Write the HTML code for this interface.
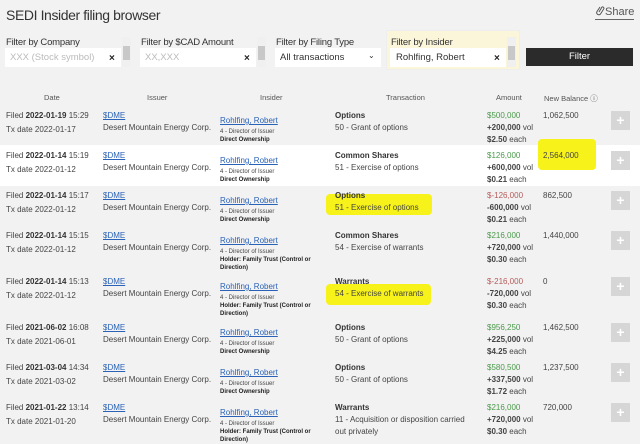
<!DOCTYPE html>
<html><head><meta charset="utf-8">
<style>
*{margin:0;padding:0;box-sizing:border-box}
body{width:640px;height:444px;overflow:hidden;background:#f2f2f2;font-family:"Liberation Sans",sans-serif;color:#333;position:relative}
.a{position:absolute;white-space:nowrap}
.t{font-size:14px;color:#333;letter-spacing:-0.4px}
.lbl{font-size:9.5px;color:#333;letter-spacing:-0.2px}
.inp{background:#fff;height:19px;font-size:9.5px;color:#bbb;padding:4px 5px}
.x{font-size:10px;color:#222;font-weight:bold}
.sb{width:9px;background:#f0f0f0}
.sb i{position:absolute;left:1px;width:7px;height:14px;background:#c8c8c8;top:9px}
.hd{font-size:7.5px;color:#555;top:93px}
.row{position:absolute;left:0;width:640px}
.f{font-size:8px;color:#444;line-height:12px}
.f b{color:#333}
.lk{color:#2a62b8;text-decoration:underline;font-size:8px}
.sm{font-size:6px;line-height:8px;color:#444}
.sm b{color:#222}
.tr{font-size:8px;line-height:12px;color:#444}
.tr b{color:#333}
.am{font-size:8px;line-height:12px;color:#444}
.g{color:#4a9a4a}.r{color:#b75a5a}
.pl{position:absolute;left:611px;width:19px;height:19px;background:#d6d6d6;color:#fff;font-weight:bold;font-size:14px;text-align:center;line-height:19px}
.hl{position:absolute;background:#f6f21a;border-radius:4px}
</style></head><body>
<div class="a t" style="left:6px;top:7px">SEDI Insider filing browser</div>
<div class="a" style="left:595px;top:5px;font-size:11px;color:#555;border-bottom:1px solid #666;line-height:13px"><svg width="10" height="11" viewBox="0 0 10 11" style="vertical-align:-1px"><path d="M4 7 L7 2 A1.5 1.5 0 0 1 9 3.5 L5.5 9 A2.2 2.2 0 0 1 1.8 6.8 L5 2" fill="none" stroke="#555" stroke-width="1"/></svg>Share</div>

<div class="a lbl" style="left:6px;top:37px">Filter by Company</div>
<div class="a inp" style="left:5px;top:48px;width:116px">XXX (Stock symbol)</div>
<div class="a x" style="left:109px;top:53px">×</div>
<div class="a sb" style="left:122px;top:37px;height:30px"><i></i></div>

<div class="a lbl" style="left:141px;top:37px">Filter by $CAD Amount</div>
<div class="a inp" style="left:140px;top:48px;width:116px">XX,XXX</div>
<div class="a x" style="left:244px;top:53px">×</div>
<div class="a sb" style="left:257px;top:37px;height:30px"><i></i></div>

<div class="a lbl" style="left:276px;top:37px">Filter by Filing Type</div>
<div class="a inp" style="left:275px;top:48px;width:106px;color:#333">All transactions</div>
<div class="a" style="left:368px;top:51px;font-size:8px;color:#333">&#x2304;</div>

<div class="a" style="left:386px;top:30px;width:134px;height:40px;background:#fbf6da;border:1px solid #eee"></div>
<div class="a lbl" style="left:391px;top:37px">Filter by Insider</div>
<div class="a inp" style="left:390px;top:48px;width:116px;color:#333;padding-left:6px">Rohlfing, Robert</div>
<div class="a x" style="left:494px;top:53px">×</div>
<div class="a sb" style="left:507px;top:37px;height:30px"><i></i></div>

<div class="a" style="left:526px;top:48px;width:107px;height:18px;background:#2b2b2b;color:#fff;font-size:9.5px;text-align:center;line-height:18px">Filter</div>

<div class="a hd" style="left:44px">Date</div>
<div class="a hd" style="left:147px">Issuer</div>
<div class="a hd" style="left:260px">Insider</div>
<div class="a hd" style="left:386px">Transaction</div>
<div class="a hd" style="left:496px">Amount</div>
<div class="a hd" style="left:544px">New Balance ⓘ</div>

<div class="row" style="top:145px;height:41px;background:#fff"></div>
<div class="hl" style="left:538px;top:139px;width:58px;height:31px"></div>
<div class="hl" style="left:326px;top:194px;width:106px;height:21px"></div>
<div class="hl" style="left:326px;top:284px;width:105px;height:21px"></div>

<div class="row" style="top:110px">
<div class="a f" style="left:6px">Filed <b>2022-01-19</b> 15:29<br><span style="line-height:16px">Tx date 2022-01-17</span></div>
<div class="a f" style="left:103px"><span class="lk">$DME</span><br>Desert Mountain Energy Corp.</div>
<div class="a" style="left:220px"><span class="lk">Rohlfing, Robert</span><div class="sm">4 - Director of Issuer<br><b>Direct Ownership</b></div></div>
<div class="a tr" style="left:335px"><b>Options</b><br>50 - Grant of options</div>
<div class="a am" style="left:487px"><span class="g">$500,000</span><br><b>+200,000</b> vol<br><b>$2.50</b> each</div>
<div class="a am" style="left:543px">1,062,500</div>
<div class="pl" style="top:1px">+</div>
</div>
<div class="row" style="top:150px">
<div class="a f" style="left:6px">Filed <b>2022-01-14</b> 15:19<br><span style="line-height:16px">Tx date 2022-01-12</span></div>
<div class="a f" style="left:103px"><span class="lk">$DME</span><br>Desert Mountain Energy Corp.</div>
<div class="a" style="left:220px"><span class="lk">Rohlfing, Robert</span><div class="sm">4 - Director of Issuer<br><b>Direct Ownership</b></div></div>
<div class="a tr" style="left:335px"><b>Common Shares</b><br>51 - Exercise of options</div>
<div class="a am" style="left:487px"><span class="g">$126,000</span><br><b>+600,000</b> vol<br><b>$0.21</b> each</div>
<div class="a am" style="left:543px">2,564,000</div>
<div class="pl" style="top:1px">+</div>
</div>
<div class="row" style="top:190px">
<div class="a f" style="left:6px">Filed <b>2022-01-14</b> 15:17<br><span style="line-height:16px">Tx date 2022-01-12</span></div>
<div class="a f" style="left:103px"><span class="lk">$DME</span><br>Desert Mountain Energy Corp.</div>
<div class="a" style="left:220px"><span class="lk">Rohlfing, Robert</span><div class="sm">4 - Director of Issuer<br><b>Direct Ownership</b></div></div>
<div class="a tr" style="left:335px"><b>Options</b><br>51 - Exercise of options</div>
<div class="a am" style="left:487px"><span class="r">$-126,000</span><br><b>-600,000</b> vol<br><b>$0.21</b> each</div>
<div class="a am" style="left:543px">862,500</div>
<div class="pl" style="top:1px">+</div>
</div>
<div class="row" style="top:230px">
<div class="a f" style="left:6px">Filed <b>2022-01-14</b> 15:15<br><span style="line-height:16px">Tx date 2022-01-12</span></div>
<div class="a f" style="left:103px"><span class="lk">$DME</span><br>Desert Mountain Energy Corp.</div>
<div class="a" style="left:220px"><span class="lk">Rohlfing, Robert</span><div class="sm">4 - Director of Issuer<br><b>Holder: Family Trust (Control or<br>Direction)</b></div></div>
<div class="a tr" style="left:335px"><b>Common Shares</b><br>54 - Exercise of warrants</div>
<div class="a am" style="left:487px"><span class="g">$216,000</span><br><b>+720,000</b> vol<br><b>$0.30</b> each</div>
<div class="a am" style="left:543px">1,440,000</div>
<div class="pl" style="top:1px">+</div>
</div>
<div class="row" style="top:276px">
<div class="a f" style="left:6px">Filed <b>2022-01-14</b> 15:13<br><span style="line-height:16px">Tx date 2022-01-12</span></div>
<div class="a f" style="left:103px"><span class="lk">$DME</span><br>Desert Mountain Energy Corp.</div>
<div class="a" style="left:220px"><span class="lk">Rohlfing, Robert</span><div class="sm">4 - Director of Issuer<br><b>Holder: Family Trust (Control or<br>Direction)</b></div></div>
<div class="a tr" style="left:335px"><b>Warrants</b><br>54 - Exercise of warrants</div>
<div class="a am" style="left:487px"><span class="r">$-216,000</span><br><b>-720,000</b> vol<br><b>$0.30</b> each</div>
<div class="a am" style="left:543px">0</div>
<div class="pl" style="top:1px">+</div>
</div>
<div class="row" style="top:322px">
<div class="a f" style="left:6px">Filed <b>2021-06-02</b> 16:08<br><span style="line-height:16px">Tx date 2021-06-01</span></div>
<div class="a f" style="left:103px"><span class="lk">$DME</span><br>Desert Mountain Energy Corp.</div>
<div class="a" style="left:220px"><span class="lk">Rohlfing, Robert</span><div class="sm">4 - Director of Issuer<br><b>Direct Ownership</b></div></div>
<div class="a tr" style="left:335px"><b>Options</b><br>50 - Grant of options</div>
<div class="a am" style="left:487px"><span class="g">$956,250</span><br><b>+225,000</b> vol<br><b>$4.25</b> each</div>
<div class="a am" style="left:543px">1,462,500</div>
<div class="pl" style="top:1px">+</div>
</div>
<div class="row" style="top:362px">
<div class="a f" style="left:6px">Filed <b>2021-03-04</b> 14:34<br><span style="line-height:16px">Tx date 2021-03-02</span></div>
<div class="a f" style="left:103px"><span class="lk">$DME</span><br>Desert Mountain Energy Corp.</div>
<div class="a" style="left:220px"><span class="lk">Rohlfing, Robert</span><div class="sm">4 - Director of Issuer<br><b>Direct Ownership</b></div></div>
<div class="a tr" style="left:335px"><b>Options</b><br>50 - Grant of options</div>
<div class="a am" style="left:487px"><span class="g">$580,500</span><br><b>+337,500</b> vol<br><b>$1.72</b> each</div>
<div class="a am" style="left:543px">1,237,500</div>
<div class="pl" style="top:1px">+</div>
</div>
<div class="row" style="top:402px">
<div class="a f" style="left:6px">Filed <b>2021-01-22</b> 13:14<br><span style="line-height:16px">Tx date 2021-01-20</span></div>
<div class="a f" style="left:103px"><span class="lk">$DME</span><br>Desert Mountain Energy Corp.</div>
<div class="a" style="left:220px"><span class="lk">Rohlfing, Robert</span><div class="sm">4 - Director of Issuer<br><b>Holder: Family Trust (Control or<br>Direction)</b></div></div>
<div class="a tr" style="left:335px"><b>Warrants</b><br>11 - Acquisition or disposition carried<br>out privately</div>
<div class="a am" style="left:487px"><span class="g">$216,000</span><br><b>+720,000</b> vol<br><b>$0.30</b> each</div>
<div class="a am" style="left:543px">720,000</div>
<div class="pl" style="top:1px">+</div>
</div>
</body></html>
